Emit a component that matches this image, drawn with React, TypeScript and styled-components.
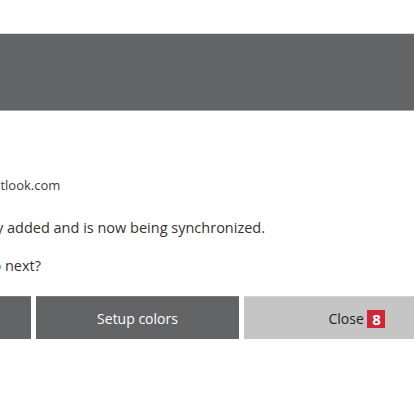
import React from "react";
import styled, { createGlobalStyle } from "styled-components";

const GlobalStyle = createGlobalStyle`
  html, body {
    margin: 0;
    padding: 0;
    background: #ffffff;
  }
  body {
    font-family: "Open Sans", "Noto Sans", "Liberation Sans", sans-serif;
  }
`;

const Page = styled.div`
  width: 414px;
  height: 393px;
  overflow: hidden;
  background: #ffffff;
  padding-top: 33px;
  box-sizing: border-box;
`;

const Banner = styled.div`
  height: 76px;
  background: #636466;
  border-top: 1px solid #d6d6d6;
  border-bottom: 1px solid #a4a4a4;
`;

const Content = styled.div`
  margin-left: -186px;
  width: 640px;
  display: flex;
  flex-direction: column;
`;

const Account = styled.div`
  margin-top: 66px;
  font-size: 13px;
  line-height: 16px;
  color: #3c3c3c;
  white-space: nowrap;
`;

const Message = styled.p<{ $top: number; $indent?: number }>`
  margin: ${(props) => props.$top}px 0 0 ${(props) => props.$indent ?? 0}px;
  font-size: 14.5px;
  line-height: 19px;
  color: #333333;
  white-space: nowrap;
`;

const Actions = styled.div`
  display: flex;
  gap: 5px;
  margin-top: 21px;
  margin-left: 14px;
`;

const ActionButton = styled.button<{ $light?: boolean; $wide?: boolean }>`
  width: ${(props) => (props.$wide ? "226px" : "203px")};
  height: 43px;
  flex-shrink: 0;
  display: flex;
  align-items: center;
  justify-content: center;
  border: none;
  border-top: 1px solid ${(props) => (props.$light ? "#d2d3d2" : "#7a7b7d")};
  background: ${(props) => (props.$light ? "#c4c5c4" : "#636466")};
  color: ${(props) => (props.$light ? "#222222" : "#ffffff")};
  font-family: inherit;
  font-size: 14px;
  padding: 0;
  white-space: pre;
`;

const Badge = styled.span`
  display: inline-flex;
  align-items: center;
  justify-content: center;
  width: 18px;
  height: 18px;
  background: #d1263a;
  color: #ffffff;
  font-weight: 700;
  font-size: 15px;
  line-height: 18px;
  margin-top: 2px;
`;

export default function App() {
  return (
    <>
      <GlobalStyle />
      <Page>
        <Banner />
        <Content>
          <Account>Account: john.anderson84@outlook.com</Account>
          <Message $top={25}>
            An account was successfully added and is now being synchronized.
          </Message>
          <Message $top={19} $indent={12}>
            What would you like to do next?
          </Message>
          <Actions>
            <ActionButton>Add another account</ActionButton>
            <ActionButton>Setup colors</ActionButton>
            <ActionButton $light $wide>
              {"Close "}
              <Badge>8</Badge>
            </ActionButton>
          </Actions>
        </Content>
      </Page>
    </>
  );
}
